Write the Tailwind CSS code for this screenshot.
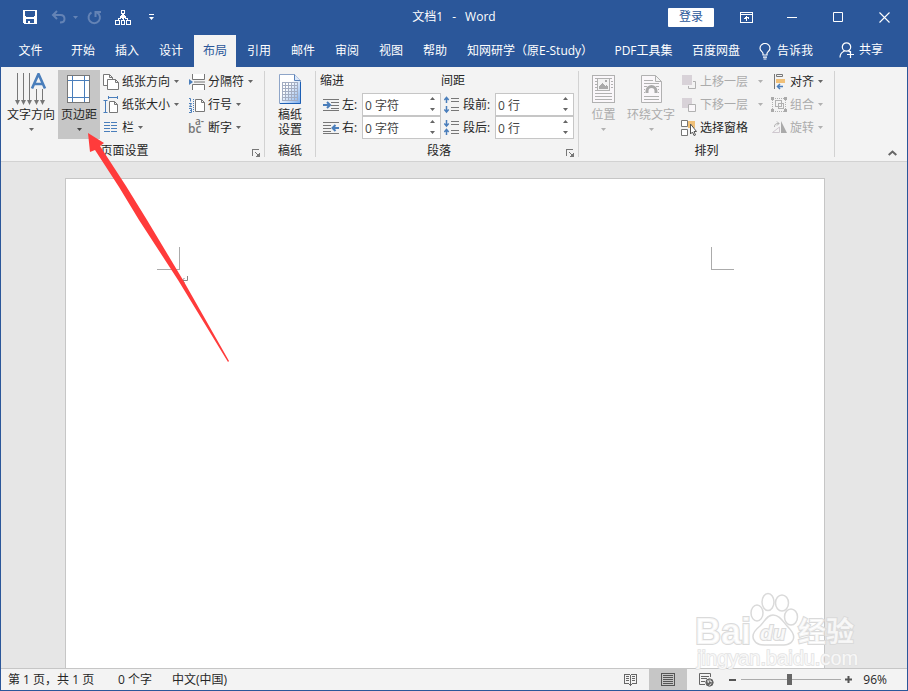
<!DOCTYPE html>
<html lang="zh-CN">

<head>
    <meta charset="UTF-8">
    <meta name="viewport" content="width=device-width, initial-scale=1.0">
    <title>文档1 - Word</title>
    <script src="https://cdn.jsdelivr.net/npm/@tailwindcss/browser@4"></script>
</head>

<body class="font-['Open_Sans','Noto_Sans_CJK_SC',sans-serif] text-xs leading-4 text-[#262626]">
    <div class="relative flex flex-col min-h-screen border border-[#2b579a] bg-[#e6e6e6] overflow-hidden">

        <!-- Title bar -->
        <header class="bg-[#2b579a] text-white">
            <div class="grid grid-cols-[1fr_auto_1fr] items-center h-8 mb-0.5">
                <div class="flex items-center pl-5">
                    <button aria-label="保存" class="w-[18px] h-5 flex items-center justify-center">
                        <svg width="14" height="14" viewBox="0 0 14 14" shape-rendering="crispEdges"><path fill="#fff" fill-rule="evenodd" d="M0 0H14V14H1L0 13ZM2 1V6H3V7H11V6H12V1ZM3 9V13H5V11H7V13H11V9Z"/></svg>
                    </button>
                    <button aria-label="撤消" class="ml-3 w-4 h-5 flex items-center justify-center">
                        <svg width="16" height="14" viewBox="0 0 16 14" fill="none" stroke="#6483b5" stroke-width="2"><path d="M6 1 2 5 6 9M2.500 5H9.500C12 5 13.500 6.500 13.500 9S12 12.500 9 12.500"/></svg>
                    </button>
                    <button aria-label="撤消选项" class="ml-1 w-2 h-5 flex items-center justify-center">
                        <svg width="5" height="3" viewBox="0 0 5 3"><path fill="#6483b5" d="M0 0H5L2.500 3Z"/></svg>
                    </button>
                    <button aria-label="重复" class="ml-1.5 w-[18px] h-5 flex items-center justify-center">
                        <svg width="15" height="15" viewBox="0 0 15 15" fill="none" stroke="#6483b5" stroke-width="2"><path d="M4.500 2.500A5.700 5.700 0 1 0 10 2.500M8.500 7V2H14"/></svg>
                    </button>
                    <button aria-label="组织结构" class="ml-2.5 w-5 h-5 flex items-center justify-center">
                        <svg width="16" height="15" viewBox="0 0 16 15" fill="none" stroke="#fff" shape-rendering="crispEdges"><path d="M6.500.500H9.500V3.500H6.500ZM.500 10.500H4.500V14.500H.500ZM6.500 10.500H9.500V14.500H6.500ZM11.500 10.500H15.500V14.500H11.500ZM8.500 9V10M3.500 10V8.500H5.500V6.500M12.500 10V8.500H10.500V6.500"/><path stroke="none" fill="#fff" d="M7 4H9V5H10V6H11V7H10V8H9V9H7V8H6V7H5V6H6V5H7Z"/></svg>
                    </button>
                    <button aria-label="自定义快速访问工具栏" class="ml-3 w-3 h-5 flex items-center justify-center">
                        <svg width="5" height="6" viewBox="0 0 5 6" fill="#fff"><path d="M0 0H5V1H0ZM0 3H5L2.500 6Z"/></svg>
                    </button>
                </div>
                <h1 class="flex gap-[9px]"><span>文档1</span><span>-</span><span>Word</span></h1>
                <div class="flex items-center justify-end">
                    <button class="w-[46px] h-[19px] mr-[9px] bg-white text-[#2b579a] rounded-[1px]">登录</button>
                    <button aria-label="功能区显示选项" class="w-[46px] h-[30px] flex items-center justify-center">
                        <svg width="13" height="11" viewBox="0 0 13 11" fill="none" stroke="#fff" shape-rendering="crispEdges"><path d="M.500.500H12.500V10.500H.500ZM1 2.500H12M6.500 9V4M4 6.500H5V5.500H8V6.500H9"/></svg>
                    </button>
                    <button aria-label="最小化" class="w-[46px] h-[30px] flex items-center justify-center">
                        <svg width="10" height="1" viewBox="0 0 10 1"><path fill="#fff" d="M0 0H10V1H0Z"/></svg>
                    </button>
                    <button aria-label="最大化" class="w-[46px] h-[30px] flex items-center justify-center">
                        <svg width="10" height="10" viewBox="0 0 10 10"><path fill="none" stroke="#fff" d="M.500.500H9.500V9.500H.500Z"/></svg>
                    </button>
                    <button aria-label="关闭" class="w-[46px] h-[30px] flex items-center justify-center">
                        <svg width="11" height="11" viewBox="0 0 11 11"><path stroke="#fff" stroke-width="1.100" d="M.500.500 10.500 10.500M10.500.500.500 10.500"/></svg>
                    </button>
                </div>
            </div>

            <!-- Ribbon tabs -->
            <nav class="flex gap-0.5 h-8 whitespace-nowrap">
                <button class="w-[59px]">文件</button>
                <button class="w-[42px]">开始</button>
                <button class="w-[42px]">插入</button>
                <button class="w-[42px]">设计</button>
                <button class="w-[42px] bg-[#f3f3f3] text-[#2b579a]">布局</button>
                <button class="w-[42px]">引用</button>
                <button class="w-[42px]">邮件</button>
                <button class="w-[42px]">审阅</button>
                <button class="w-[42px]">视图</button>
                <button class="w-[42px]">帮助</button>
                <button class="w-[146px] pl-[9px] text-left">知网研学（原E-Study）</button>
                <button class="w-[75px]">PDF工具集</button>
                <button class="w-[66px]">百度网盘</button>
                <button class="flex items-center gap-1.5 pl-2">
                    <svg width="12" height="17" viewBox="0 0 12 17" fill="none" stroke="#fff" stroke-width="1.200"><path d="M4 12V10.500C4 9 1 8 1 5.200A5 4.700 0 0 1 11 5.200C11 8 8 9 8 10.500V12ZM4 14.100H8M4.500 16H7.500"/></svg>
                    告诉我
                </button>
                <button class="flex items-center gap-1 ml-auto pr-6 pb-0.5">
                    <svg width="16" height="16" viewBox="0 0 16 16" fill="none" stroke="#fff" stroke-width="1.200"><circle cx="7.500" cy="5" r="4.200"/><path d="M1 15.500C1 11.500 3 10 5.500 9M9.500 9 11 10M8 12.500H15M11.500 9V16"/></svg>
                    共享
                </button>
            </nav>
        </header>

        <!-- Ribbon -->
        <section class="flex h-[95px] bg-[#f3f3f3] border-b border-[#d2d2d2] whitespace-nowrap">

            <!-- Page setup -->
            <div class="relative w-[263px] pt-[3px]">
                <div class="flex h-[69px]">
                    <button class="w-[57px] pt-[3px] pl-[3px] flex flex-col items-center">
                        <svg width="32" height="32" viewBox="0 0 32 32" fill="none"><path stroke="#777" shape-rendering="crispEdges" d="M2.500 0V30M8.500 0V30M14.500 0V30M21.500 16V30M27.500 16V30"/><path fill="#777" d="M0 27H5L2.500 32ZM6 27H11L8.500 32ZM12 27H17L14.500 32ZM19 27H24L21.500 32ZM25 27H30L27.500 32Z"/><path stroke="#4a7ebb" stroke-width="2.600" d="M17 15.500 23.500 1 30 15.500M19 11H28"/></svg>
                        <span class="mt-0.5">文字方向</span>
                        <svg class="mt-[5px]" width="5" height="3" viewBox="0 0 5 3"><path fill="#666" d="M0 0H5L2.500 3Z"/></svg>
                    </button>
                    <button class="w-[42px] pt-[5px] flex flex-col items-center bg-[#c6c6c6]">
                        <svg width="24" height="28" viewBox="0 0 24 28" fill="#fff" shape-rendering="crispEdges"><path stroke="#777" d="M.500.500H22.500V27.500H.500Z"/><path stroke="#4a7ebb" d="M5.500 1V27M17.500 1V27M1 5.500H22M1 22.500H22" fill="none"/></svg>
                        <span class="mt-1">页边距</span>
                        <svg class="mt-[5px]" width="5" height="3" viewBox="0 0 5 3"><path fill="#444" d="M0 0H5L2.500 3Z"/></svg>
                    </button>
                    <div class="ml-[3px] w-[86px]">
                        <button class="flex items-center h-[23px]">
                            <svg class="mr-px" width="18" height="18" viewBox="0 0 18 18" fill="#fff" stroke="#777"><path d="M.500 1.500H6.500L9.500 4.500V12.500H.500ZM6.500 1.500V4.500H9.500"/><path d="M4.500 6.500H12.500L15.500 9.500V16.500H4.500ZM12.500 6.500V9.500H15.500"/></svg>
                            纸张方向
                            <svg class="ml-1" width="5" height="3" viewBox="0 0 5 3"><path fill="#666" d="M0 0H5L2.500 3Z"/></svg>
                        </button>
                        <button class="flex items-center h-[23px]">
                            <svg class="mr-px" width="18" height="18" viewBox="0 0 18 18" fill="none"><path stroke="#4a7ebb" d="M2.500 5V16M.500 4.500H4.500M.500 16.500H4.500M5 1.500H15M5.500 0V3M14.500 0V3"/><path stroke="#777" fill="#fff" d="M6.500 5.500H11.500L14.500 8.500V16.500H6.500ZM11.500 5.500V8.500H14.500"/></svg>
                            纸张大小
                            <svg class="ml-1" width="5" height="3" viewBox="0 0 5 3"><path fill="#666" d="M0 0H5L2.500 3Z"/></svg>
                        </button>
                        <button class="flex items-center h-[23px]">
                            <svg class="mr-px" width="18" height="18" viewBox="0 0 18 18" stroke="#4a7ebb" shape-rendering="crispEdges"><path d="M1 3.500H7M1 6.500H7M1 9.500H7M1 12.500H7M8 3.500H14M8 6.500H14M8 9.500H14M8 12.500H14"/></svg>
                            栏
                            <svg class="ml-1" width="5" height="3" viewBox="0 0 5 3"><path fill="#666" d="M0 0H5L2.500 3Z"/></svg>
                        </button>
                    </div>
                    <div>
                        <button class="flex items-center h-[23px]">
                            <svg class="mr-px" width="18" height="18" viewBox="0 0 18 18" fill="#fff" stroke="#777"><path d="M3.500 1V6.500H15.500V1M3.500 17V11.500H15.500V17M5 9H16" /><path stroke="none" fill="#4a7ebb" d="M0 6 4 9 0 12Z"/></svg>
                            分隔符
                            <svg class="ml-1" width="5" height="3" viewBox="0 0 5 3"><path fill="#666" d="M0 0H5L2.500 3Z"/></svg>
                        </button>
                        <button class="flex items-center h-[23px]">
                            <svg class="mr-px" width="18" height="18" viewBox="0 0 18 18" fill="none"><path stroke="#4a7ebb" d="M0 2.500H1.500V5.500M0 7.500H2.500L.500 10.500H3M0 12.500H2.500V16.500H0M1 14.500H2"/><path stroke="#4a7ebb" stroke-dasharray="1 1" d="M4.500 3V16"/><path stroke="#777" fill="#fff" d="M6.500 3.500H12.500L15.500 6.500V15.500H6.500ZM12.500 3.500V6.500H15.500"/></svg>
                            行号
                            <svg class="ml-1" width="5" height="3" viewBox="0 0 5 3"><path fill="#666" d="M0 0H5L2.500 3Z"/></svg>
                        </button>
                        <button class="flex items-center h-[23px]">
                            <svg class="mr-px overflow-visible" width="18" height="18" viewBox="0 0 18 18" fill="#777" font-family="Open Sans" font-weight="600"><text x="-1" y="14" font-size="12">bc</text><text x="6" y="6" font-size="10">a-</text></svg>
                            断字
                            <svg class="ml-1" width="5" height="3" viewBox="0 0 5 3"><path fill="#666" d="M0 0H5L2.500 3Z"/></svg>
                        </button>
                    </div>
                </div>
                <div class="text-center pr-4 pt-1">页面设置</div>
                <button aria-label="页面设置对话框" class="absolute right-1 bottom-1">
                    <svg width="8" height="8" viewBox="0 0 8 8" fill="none" stroke="#777" shape-rendering="crispEdges"><path d="M.500 7V.500H7M3 3 6 6M3.500 7.500H7.500V3.500"/><path fill="#777" stroke="none" d="M4 7H7V4Z"/></svg>
                </button>
            </div>
            <div class="w-px my-1 bg-[#d2d2d2]"></div>

            <!-- Manuscript paper -->
            <div class="w-[50px] pt-[3px]">
                <button class="w-full h-[69px] pt-[3px] flex flex-col items-center">
                    <svg width="24" height="32" viewBox="0 0 24 32">
                        <defs><linearGradient id="sheet" x1="0" y1="0" x2="1" y2="1"><stop offset=".4" stop-color="#fff"/><stop offset="1" stop-color="#7aabeb"/></linearGradient></defs>
                        <path fill="url(#sheet)" stroke="#8ea5c8" d="M1.500 1.500H16.500L22.500 7.500V30.500H1.500Z"/>
                        <path fill="#dbe8fa" stroke="#5b82b8" d="M16.500 1.500V7.500H22.500"/>
                        <path fill="none" stroke="#a3adc2" shape-rendering="crispEdges" d="M4.500 9.500H19.500V27.500H4.500ZM4 12.500H20M4 15.500H20M4 18.500H20M4 21.500H20M4 24.500H20M7.500 9V27M10.500 9V27M13.500 9V27M16.500 9V27"/>
                        <path stroke="#1d5fb4" d="M2 30.500H22.500V9" fill="none"/>
                    </svg>
                    <span class="leading-[15px] mt-0.5">稿纸<br>设置</span>
                </button>
                <div class="text-center pt-1">稿纸</div>
            </div>
            <div class="w-px my-1 bg-[#d2d2d2]"></div>

            <!-- Paragraph -->
            <div class="relative w-[262px] pt-[3px]">
                <div class="grid grid-cols-[124px_133px] grid-rows-[23px_23px_23px] pl-1">
                    <div class="leading-[22px]">缩进</div>
                    <div class="leading-[22px] -ml-[3px]">间距</div>
                    <div class="flex items-center">
                        <svg class="ml-[3px] mr-0.5" width="17" height="14" viewBox="0 0 17 14" fill="none"><path stroke="#777" shape-rendering="crispEdges" d="M0 1.500H16M8 4.500H16M8 7.500H16M8 10.500H16M0 12.500H16"/><path stroke="#4a7ebb" stroke-width="2" d="M0 7H6M4 4 7 7 4 10"/></svg>
                        <label for="indentLeft" class="w-5">左:</label>
                        <div class="relative w-[79px] h-[23px]">
                            <input id="indentLeft" value="0 字符" class="w-full h-full pl-0.5 pr-4 bg-white border border-[#c6c6c6] text-[#444] outline-none">
                            <svg class="absolute right-1.5 top-1" width="5" height="14" viewBox="0 0 5 14"><path fill="#666" d="M0 3H5L2.500 0ZM0 11H5L2.500 14Z"/></svg>
                        </div>
                    </div>
                    <div class="flex items-center">
                        <svg class="mr-[3px]" width="16" height="18" viewBox="0 0 16 18" fill="none"><path stroke="#777" shape-rendering="crispEdges" d="M7 2.500H15M7 5.500H15M7 11.500H15M7 14.500H15"/><path stroke="#4a7ebb" stroke-width="1.500" d="M2.500 7V2M.300 4 2.500 1.500 4.700 4M2.500 10V16M.300 13.500 2.500 16 4.700 13.500"/></svg>
                        <label for="spaceBefore" class="w-8">段前:</label>
                        <div class="relative w-[79px] h-[23px]">
                            <input id="spaceBefore" value="0 行" class="w-full h-full pl-0.5 pr-4 bg-white border border-[#c6c6c6] text-[#444] outline-none">
                            <svg class="absolute right-1.5 top-1" width="5" height="14" viewBox="0 0 5 14"><path fill="#666" d="M0 3H5L2.500 0ZM0 11H5L2.500 14Z"/></svg>
                        </div>
                    </div>
                    <div class="flex items-center">
                        <svg class="ml-[3px] mr-0.5" width="17" height="14" viewBox="0 0 17 14" fill="none"><path stroke="#777" shape-rendering="crispEdges" d="M0 1.500H16M0 4.500H8M0 7.500H8M0 10.500H8M0 12.500H16"/><path stroke="#4a7ebb" stroke-width="2" d="M16 7H10M12.500 4 9.500 7 12.500 10"/></svg>
                        <label for="indentRight" class="w-5">右:</label>
                        <div class="relative w-[79px] h-[23px]">
                            <input id="indentRight" value="0 字符" class="w-full h-full pl-0.5 pr-4 bg-white border border-[#c6c6c6] text-[#444] outline-none">
                            <svg class="absolute right-1.5 top-1" width="5" height="14" viewBox="0 0 5 14"><path fill="#666" d="M0 3H5L2.500 0ZM0 11H5L2.500 14Z"/></svg>
                        </div>
                    </div>
                    <div class="flex items-center">
                        <svg class="mr-[3px]" width="16" height="18" viewBox="0 0 16 18" fill="none"><path stroke="#777" shape-rendering="crispEdges" d="M7 2.500H15M7 5.500H15M7 11.500H15M7 14.500H15"/><path stroke="#4a7ebb" stroke-width="1.500" d="M2.500 1V7M.300 4.500 2.500 7 4.700 4.500M2.500 16V11M.300 13 2.500 10.500 4.700 13"/></svg>
                        <label for="spaceAfter" class="w-8">段后:</label>
                        <div class="relative w-[79px] h-[23px]">
                            <input id="spaceAfter" value="0 行" class="w-full h-full pl-0.5 pr-4 bg-white border border-[#c6c6c6] text-[#444] outline-none">
                            <svg class="absolute right-1.5 top-1" width="5" height="14" viewBox="0 0 5 14"><path fill="#666" d="M0 3H5L2.500 0ZM0 11H5L2.500 14Z"/></svg>
                        </div>
                    </div>
                </div>
                <div class="text-center pr-4 pt-1">段落</div>
                <button aria-label="段落对话框" class="absolute right-1 bottom-1">
                    <svg width="8" height="8" viewBox="0 0 8 8" fill="none" stroke="#777" shape-rendering="crispEdges"><path d="M.500 7V.500H7M3 3 6 6M3.500 7.500H7.500V3.500"/><path fill="#777" stroke="none" d="M4 7H7V4Z"/></svg>
                </button>
            </div>
            <div class="w-px my-1 bg-[#d2d2d2]"></div>

            <!-- Arrange -->
            <div class="w-[255px] pt-[3px]">
                <div class="flex h-[69px] text-[#ababab]">
                    <button disabled class="w-[49px] pt-[5px] flex flex-col items-center">
                        <svg width="23" height="28" viewBox="0 0 23 28" fill="none" stroke="#b1b1b1" shape-rendering="crispEdges"><path fill="#faf7fa" d="M.500.500H22.500V27.500H.500Z"/><path d="M3 3.500H20M3 6.500H5M3 9.500H5M3 12.500H5M3 15.500H5M19 6.500H21M19 9.500H21M19 12.500H21M3 18.500H20M3 21.500H20M3 24.500H20"/><path fill="#f3f3f3" d="M5.500 3.500H17.500V15.500H5.500Z"/><path fill="#aaa" stroke="none" d="M7 14V11L10 8L13 11L14 10L16 12V14ZM13 5H15V7H13Z"/></svg>
                        <span class="mt-1">位置</span>
                        <svg class="mt-[5px]" width="5" height="3" viewBox="0 0 5 3"><path fill="#b1b1b1" d="M0 0H5L2.500 3Z"/></svg>
                    </button>
                    <button disabled class="w-[46px] pt-[5px] flex flex-col items-center">
                        <svg width="21" height="28" viewBox="0 0 21 28" fill="none" stroke="#b1b1b1"><path fill="#faf7fa" d="M.500.500H14.500L20.500 6.500V27.500H.500ZM14.500.500V6.500H20.500"/><path shape-rendering="crispEdges" d="M3 5.500H12M3 8.500H18M3 11.500H6M15 11.500H18M3 14.500H4M17 14.500H18M3 17.500H4M17 17.500H18M3 21.500H18M3 24.500H18"/><path stroke="#aaa" stroke-width="3" d="M6 18V16A4.500 4.500 0 0 1 15 16V18"/></svg>
                        <span class="mt-1">环绕文字</span>
                        <svg class="mt-[5px]" width="5" height="3" viewBox="0 0 5 3"><path fill="#b1b1b1" d="M0 0H5L2.500 3Z"/></svg>
                    </button>
                    <div class="ml-[7px] w-[90px]">
                        <button disabled class="flex items-center h-[23px]">
                            <svg class="mr-px" width="18" height="18" viewBox="0 0 18 18" fill="none"><path fill="#d8d2d8" d="M1 2H11V12H1Z"/><path stroke="#b1b1b1" d="M12 8.500H14.500V15.500H7.500V13"/></svg>
                            上移一层
                            <svg class="ml-2.5" width="5" height="3" viewBox="0 0 5 3"><path fill="#b1b1b1" d="M0 0H5L2.500 3Z"/></svg>
                        </button>
                        <button disabled class="flex items-center h-[23px]">
                            <svg class="mr-px" width="18" height="18" viewBox="0 0 18 18"><path fill="#d8d2d8" d="M1 2H11V12H1Z"/><path fill="#faf7fa" stroke="#b1b1b1" d="M7.500 8.500H14.500V15.500H7.500Z"/></svg>
                            下移一层
                            <svg class="ml-2.5" width="5" height="3" viewBox="0 0 5 3"><path fill="#b1b1b1" d="M0 0H5L2.500 3Z"/></svg>
                        </button>
                        <button class="flex items-center h-[23px] text-[#262626]">
                            <svg class="mr-px" width="18" height="18" viewBox="0 0 18 18" fill="#fff"><path fill="#f0c078" d="M7 2H14V9H7Z"/><path stroke="#777" d="M.500 1.500H6.500V7.500H.500ZM.500 10.500H6.500V16.500H.500Z"/><path stroke="#555" d="M9.500 5V15L11.500 13L13 16.500L14.500 16L13 12.500H15.500Z"/></svg>
                            选择窗格
                        </button>
                    </div>
                    <div>
                        <button class="flex items-center h-[23px] text-[#262626]">
                            <svg class="mr-px" width="18" height="18" viewBox="0 0 18 18" fill="none"><path stroke="#777" d="M3.500 1V16M5.500 1.500H11.500V3.500H5.500Z"/><path fill="#f0c078" d="M5 6H14V10H5Z"/><path stroke="#4a7ebb" stroke-width="1.500" d="M12 13.500H6M9 11 6.500 13.500 9 16"/></svg>
                            对齐
                            <svg class="ml-1" width="5" height="3" viewBox="0 0 5 3"><path fill="#666" d="M0 0H5L2.500 3Z"/></svg>
                        </button>
                        <button disabled class="flex items-center h-[23px]">
                            <svg class="mr-px" width="18" height="18" viewBox="0 0 18 18" fill="none" stroke="#b1b1b1" shape-rendering="crispEdges"><path d="M1.500 2.500H14.500V15.500H1.500Z" stroke-dasharray="1 1"/><path d="M4.500 4.500H10.500V10.500H4.500ZM7.500 7.500H12.500V12.500H7.500Z"/><path fill="#aaa" stroke="none" d="M0 1H3V4H0ZM13 1H16V4H13ZM0 13H3V16H0ZM13 13H16V16H13Z"/></svg>
                            组合
                            <svg class="ml-1" width="5" height="3" viewBox="0 0 5 3"><path fill="#b1b1b1" d="M0 0H5L2.500 3Z"/></svg>
                        </button>
                        <button disabled class="flex items-center h-[23px]">
                            <svg class="mr-px" width="18" height="18" viewBox="0 0 18 18" fill="none" stroke="#b1b1b1"><path stroke="#cfc8cf" d="M1.500 13.500H8.500V8Z"/><path d="M3.500 8C3.500 5 5 4.500 8 4.500M6 2.500 8 4.500 6 6.500"/><path fill="#aaa" stroke="none" d="M10 2 16 14H10Z"/></svg>
                            旋转
                            <svg class="ml-1" width="5" height="3" viewBox="0 0 5 3"><path fill="#b1b1b1" d="M0 0H5L2.500 3Z"/></svg>
                        </button>
                    </div>
                </div>
                <div class="text-center pt-1">排列</div>
            </div>
            <div class="w-px my-1 bg-[#d2d2d2]"></div>
            <button aria-label="折叠功能区" class="ml-auto self-end p-1 mr-1.5 mb-px">
                <svg width="9" height="6" viewBox="0 0 9 6"><path fill="none" stroke="#666" stroke-width="2" d="M.700 5 4.500 1.500 8.300 5"/></svg>
            </button>
        </section>

        <!-- Document -->
        <main class="flex flex-1 justify-center pt-4 pr-[18px]">
            <article class="w-[760px] bg-white border border-b-0 border-[#c6c6c6] pt-[68px] pl-[91px] pr-[90px]">
                <div class="flex justify-between">
                    <div class="w-[23px] h-[23px] border-r border-b border-[#ababab]"></div>
                    <div class="w-[23px] h-[23px] border-l border-b border-[#ababab]"></div>
                </div>
                <p class="pl-6 pt-1.5"><svg width="7" height="8" viewBox="0 0 7 8" fill="none" stroke="#888"><path d="M6.500 0V4.500H1M3.500 2 1 4.500 3.500 7"/></svg></p>
            </article>
        </main>

        <!-- Status bar -->
        <footer class="flex items-center h-[22px] bg-[#f3f3f3] border-t border-[#c6c6c6] pl-[7px]">
            <span class="w-[110px] whitespace-nowrap">第 1 页，共 1 页</span>
            <span class="w-[54px]">0 个字</span>
            <span>中文(中国)</span>
            <div class="flex items-center h-full ml-auto">
                <button aria-label="阅读视图" class="w-[38px] h-full flex items-center justify-center">
                    <svg width="13" height="13" viewBox="0 0 13 13" fill="none" stroke="#666" shape-rendering="crispEdges"><path d="M.500 1.500H5.500L6.500 2.500L7.500 1.500H12.500V10.500H8.500L6.500 12L4.500 10.500H.500ZM6.500 2V13M2 3.500H5M2 5.500H5M2 7.500H5M8 3.500H11M8 5.500H11M8 7.500H11"/></svg>
                </button>
                <button aria-label="页面视图" class="w-[38px] h-full flex items-center justify-center bg-[#c6c6c6]">
                    <svg width="14" height="13" viewBox="0 0 14 13" fill="none" stroke="#555" shape-rendering="crispEdges"><path d="M.500.500H13.500V12.500H.500ZM2 2.500H12M2 4.500H12M2 6.500H12M2 8.500H12M2 10.500H12"/></svg>
                </button>
                <button aria-label="Web 版式视图" class="w-[38px] h-full flex items-center justify-center">
                    <svg width="15" height="14" viewBox="0 0 15 14" fill="none" stroke="#666"><path d="M6 11.500H.500V.500H11.500V4M2 3.500H10M2 5.500H8M2 8.500H6"/><circle cx="10.500" cy="9.500" r="3.700" fill="#666"/><path stroke="#f3f3f3" d="M8 8H10L9 10M11 6.500V8L13 9M10.500 12.500 12 10.500"/></svg>
                </button>
                <button aria-label="缩小" class="mx-1 w-2 h-full flex items-center"><svg width="7" height="2" viewBox="0 0 7 2"><path fill="#555" d="M0 0H7V2H0Z"/></svg></button>
                <input type="range" aria-label="缩放" min="10" max="190" value="96" class="w-[100px] h-[11px] appearance-none bg-transparent [&::-webkit-slider-runnable-track]:h-px [&::-webkit-slider-runnable-track]:bg-[#ababab] [&::-webkit-slider-thumb]:appearance-none [&::-webkit-slider-thumb]:w-[5px] [&::-webkit-slider-thumb]:h-[11px] [&::-webkit-slider-thumb]:-mt-[5px] [&::-webkit-slider-thumb]:bg-[#666]">
                <button aria-label="放大" class="ml-1 w-2 h-full flex items-center"><svg width="7" height="7" viewBox="0 0 7 7"><path fill="#555" d="M0 2.500H2.500V0H4.500V2.500H7V4.500H4.500V7H2.500V4.500H0Z"/></svg></button>
                <button class="ml-2.5 mr-5">96%</button>
            </div>
        </footer>

        <!-- Pointer to the margins button -->
        <svg class="absolute left-[87px] top-[132px] pointer-events-none" width="144" height="232" viewBox="88 133 144 232"><path fill="#ff3b3b" d="M88 133 104 143 100 146 126 186 147 220 183 280 229 361 228 362 178 280 139 220 119 187 95 150 90 152Z"/></svg>

        <!-- Watermark -->
        <svg class="absolute right-12 bottom-[18px] pointer-events-none" width="166" height="82" viewBox="694 590 166 82" fill="#fff" fill-opacity=".75" stroke="#dadada" stroke-width="1.500">
            <ellipse cx="758" cy="613" rx="6" ry="8"/>
            <ellipse cx="769" cy="602" rx="6" ry="8.500"/>
            <ellipse cx="783" cy="603" rx="6.500" ry="8"/>
            <ellipse cx="792" cy="617" rx="6.500" ry="8"/>
            <path d="M774 615C781 615 784 622 789 627 794 632 796 636 794 640 791 646 785 645 774 645 764 645 758 646 755 640 752 635 756 630 761 626 766 621 768 615 774 615Z"/>
            <g font-family="Liberation Sans" font-weight="bold" paint-order="stroke">
                <text x="696" y="644" font-size="36" stroke-width="2">Bai</text>
                <text x="761" y="640" font-size="21" font-style="italic" stroke-width="2">du</text>
            </g>
            <text x="799" y="642" font-size="28" font-weight="bold" font-family="Noto Sans CJK SC" stroke-width="2" paint-order="stroke">经验</text>
            <text x="698" y="665" font-size="20" font-family="Liberation Sans" stroke="#e2e2e2" paint-order="stroke">jingyan.baidu.com</text>
        </svg>
    </div>
</body>

</html>
